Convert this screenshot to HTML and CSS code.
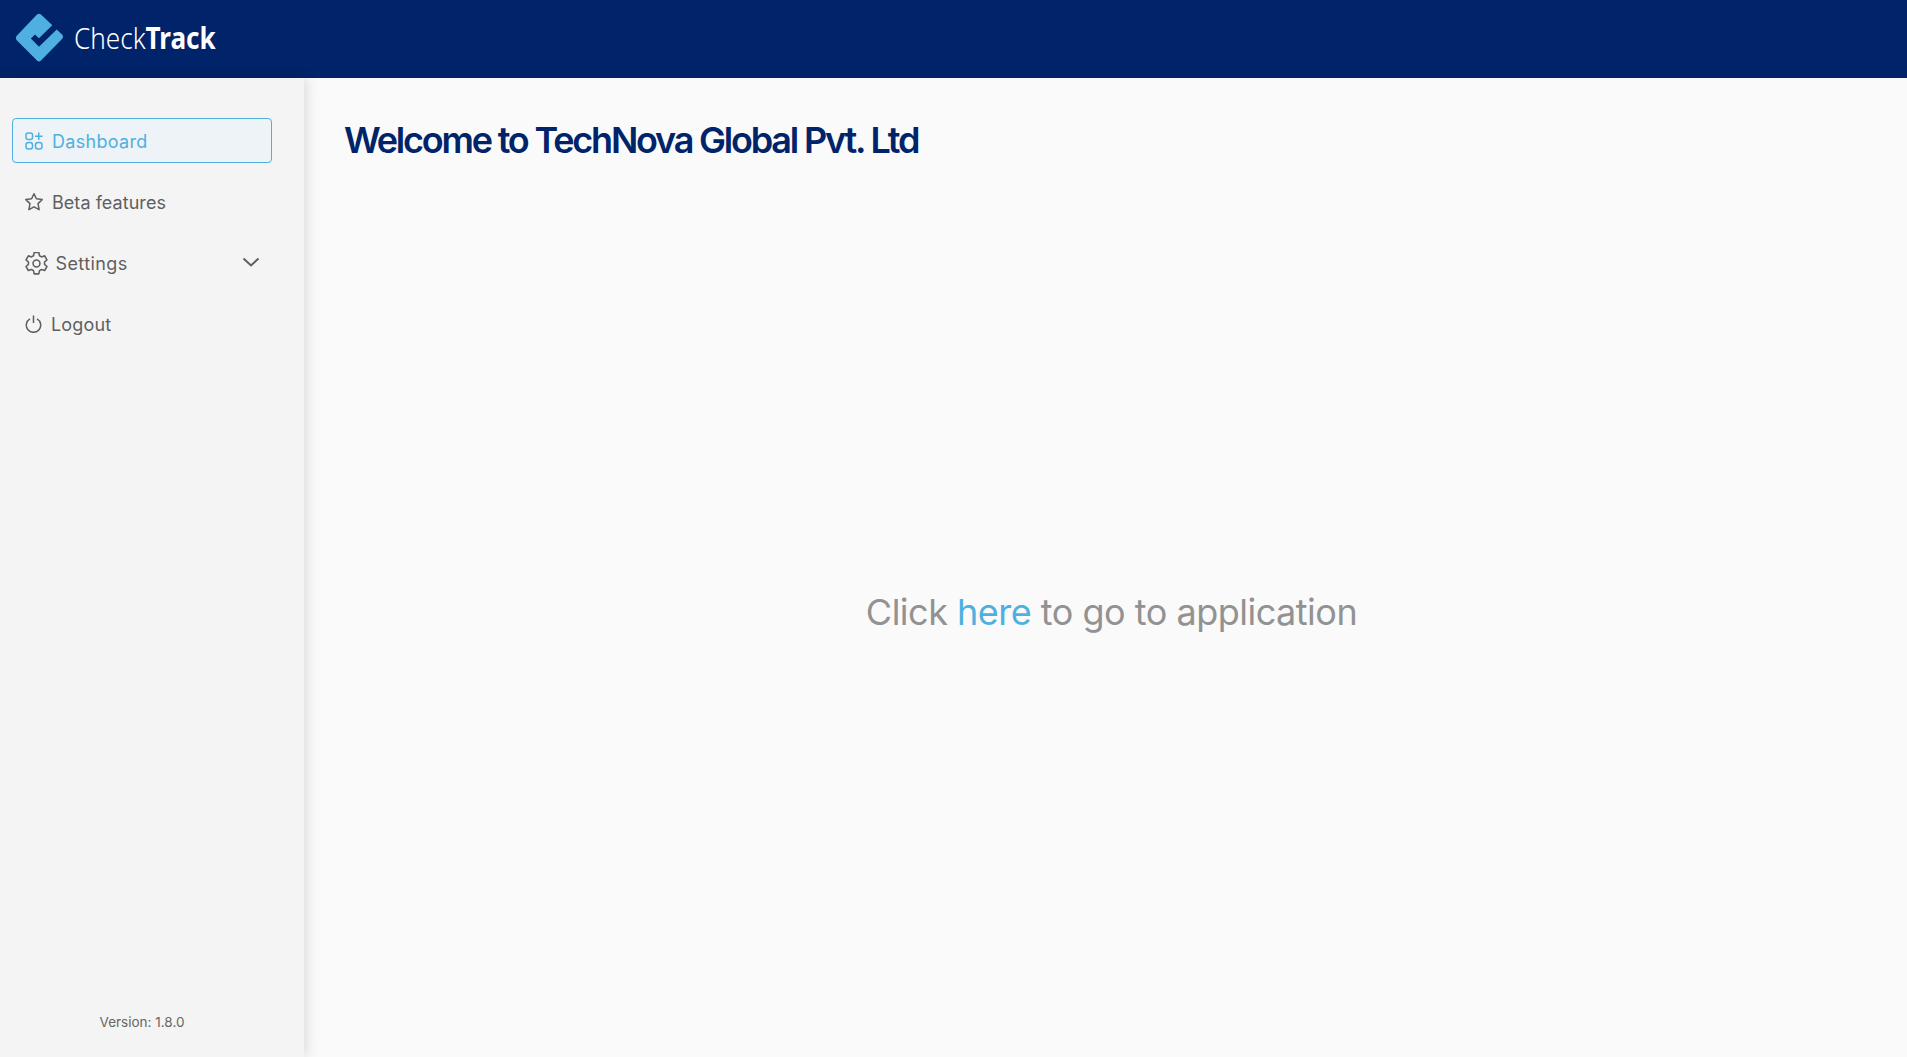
FILE: index.html
```html
<!DOCTYPE html>
<html lang="en">
<head>
<meta charset="UTF-8" />
<meta name="viewport" content="width=device-width, initial-scale=1" />
<title>CheckTrack</title>
<link rel="stylesheet" href="styles.css">
</head>
<body>
<header class="topbar">
  <a class="logo" href="#">
    <svg class="logo-mark" width="50" height="50" viewBox="0 0 50 50">
      <path d="M22 1.600 Q24 0 26 1.600 L47 21.500 Q49 23.500 47 26 L26 47.500 Q24 49.500 22 47.500 L1.500 27 Q0 25 1.500 23 Z" fill="#4fb0e0"/>
      <path d="M18 23.500 L24 29.500 L44 10" fill="none" stroke="#002369" stroke-width="6"/>
    </svg>
    <span class="logo-text">Check<b>Track</b></span>
  </a>
</header>

<div class="layout">
  <aside class="sidebar">
    <nav class="menu">
      <a class="menu-item active" href="#">
        <svg class="icon" width="18" height="18" viewBox="0 0 18 18" fill="none" stroke="currentColor" stroke-width="1.500">
          <rect x="1" y="1" width="6.500" height="6.500" rx="2"/>
          <rect x="1" y="10.500" width="6.500" height="6.500" rx="2.500"/>
          <rect x="10.500" y="10.500" width="6.500" height="6.500" rx="2.500"/>
          <path d="M13.750 .5V8M10 4.250H17.500"/>
        </svg>
        Dashboard
      </a>
      <a class="menu-item beta" href="#">
        <svg class="icon" width="18" height="18" viewBox="0 0 18 18" fill="none" stroke="currentColor" stroke-width="1.500" stroke-linejoin="round">
          <path d="M9 .8 L11.400 5.800 L17.200 6.600 L13 10.600 L14.100 16.700 L9 13.800 L3.900 16.700 L5 10.600 L.8 6.600 L6.600 5.800Z"/>
        </svg>
        Beta features
      </a>
      <a class="menu-item settings" href="#">
        <svg class="icon" width="23" height="23" viewBox="1 1 22 22" fill="none" stroke="currentColor" stroke-width="1.500" stroke-linejoin="round">
          <circle cx="12" cy="12" r="3.300"/>
          <path d="M9.800 1.500h4.400l.7 3.100 1.900 1.100 3-1 2.200 3.800-2.300 2.100v2.200l2.300 2.100-2.200 3.800-3-1-1.900 1.100-.7 3.100H9.800l-.7-3.100-1.900-1.100-3 1-2.200-3.800 2.300-2.100v-2.200L2 8.500l2.200-3.800 3 1 1.900-1.100z"/>
        </svg>
        Settings
        <svg class="chevron" width="18" height="10" viewBox="0 0 18 10" fill="none" stroke="currentColor" stroke-width="2">
          <path d="M1.500 1.500 L9 8.500 L16.500 1.500"/>
        </svg>
      </a>
      <a class="menu-item" href="#">
        <svg class="icon" width="17" height="18" viewBox="0 0 17 18" fill="none" stroke="currentColor" stroke-width="1.500">
          <path d="M5 3.800 A7.200 7.200 0 1 0 12 3.800"/>
          <path d="M8.500 .5V8"/>
        </svg>
        Logout
      </a>
    </nav>
    <div class="version">Version: 1.8.0</div>
  </aside>

  <main class="content">
    <h1>Welcome to TechNova Global Pvt. Ltd</h1>
    <div class="go-app">
      <p>Click <a href="#">here</a> to go to application</p>
    </div>
  </main>
</div>
</body>
</html>
```

FILE: styles.css
```css
:root {
  --navy: #002369;
  --sky: #4fb0e0;
  --grey-text: #5f5f5f;
}
* {
  box-sizing: border-box;
}
html, body {
  height: 100%;
}
body {
  margin: 0;
  display: flex;
  flex-direction: column;
  font-family: Inter, sans-serif;
  background: #fafafa;
  overflow: hidden;
}
a {
  text-decoration: none;
}

.topbar {
  height: 78px;
  flex: none;
  background: var(--navy);
  display: flex;
  align-items: center;
  padding: 0 0 3px 15px;
}
.logo {
  display: flex;
  align-items: center;
  gap: 9px;
}
.logo-text {
  font-family: "Noto Sans", sans-serif;
  font-size: 30px;
  font-weight: 300;
  color: #fff;
  transform: scaleX(0.87);
  transform-origin: left center;
}
.logo-text b {
  font-weight: 700;
}

.layout {
  flex: 1;
  display: flex;
  min-height: 0;
}
.sidebar {
  width: 304px;
  flex: none;
  display: flex;
  flex-direction: column;
  background: #f4f4f4;
  box-shadow: 3px 0 12px rgba(0, 0, 0, 0.12);
  padding: 40px 32px 27px 12px;
}
.menu {
  display: flex;
  flex-direction: column;
  gap: 16px;
}
.menu-item {
  height: 45px;
  display: flex;
  align-items: center;
  gap: 9px;
  padding: 1px 12px 0;
  border: 1px solid transparent;
  border-radius: 4px;
  font-size: 18px;
  letter-spacing: 0.15px;
  color: var(--grey-text);
}
.menu-item.active {
  color: var(--sky);
  background: #edf3f7;
  border-color: var(--sky);
  letter-spacing: 0.3px;
}
.menu-item.beta {
  letter-spacing: 0.05px;
}
.menu-item.settings {
  gap: 8px;
  padding-right: 11px;
  letter-spacing: 0.4px;
}
.icon {
  flex: none;
}
.settings .icon {
  margin-left: -0.5px;
}
.chevron {
  margin-left: auto;
  margin-top: -2px;
}
.version {
  margin-top: auto;
  text-align: center;
  font-size: 13.5px;
  color: #666;
}

.content {
  flex: 1;
  display: flex;
  flex-direction: column;
  padding: 40px 40px 0;
}
h1 {
  margin: 0 0 4px;
  font-size: 36px;
  font-weight: 600;
  letter-spacing: -2.2px;
  color: var(--navy);
}
.go-app {
  flex: 1;
  display: flex;
  align-items: center;
  justify-content: center;
  padding-left: 12px;
}
.go-app p {
  margin: 0;
  font-size: 36px;
  font-weight: 430;
  letter-spacing: -0.5px;
  color: #929292;
}
.go-app a {
  color: var(--sky);
}
```
